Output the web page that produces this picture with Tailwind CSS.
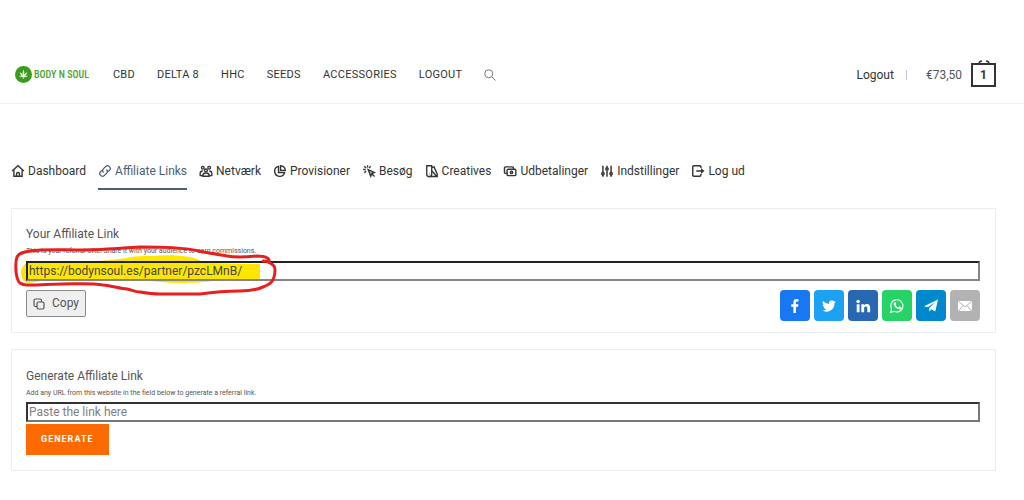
<!DOCTYPE html>
<html lang="da">
<head>
    <meta charset="UTF-8">
    <meta name="viewport" content="width=device-width, initial-scale=1.0">
    <title>Affiliate Links - Body N Soul</title>
    <script src="https://cdn.jsdelivr.net/npm/@tailwindcss/browser@4"></script>
</head>
<body class="bg-white font-['Roboto',sans-serif] text-[#333]">

    <!-- Header -->
    <header class="flex items-center h-[104px] pt-[46px] pl-[15px] pr-7 border-b border-[#f1f1f1]">
        <a href="#" class="flex items-center gap-[2px] text-[#4a9f2c]">
            <svg class="size-[17px]" viewBox="0 0 34 34">
                <circle cx="17" cy="17" r="17" fill="#3a9b1c"/>
                <path fill="#fff" d="M17 7c1.600 3.500 2 8 1 12 1.600-3.500 3.600-5.500 6.500-6.500-.8 3-2.500 5.500-5.200 7.500 2.400-1 4.500-1 6.700 0-2.500 1.600-5 2-7.500 1.400l1.800 2.200-2.800-1.200V26h-1v-3.600l-2.800 1.200 1.800-2.200c-2.500.6-5 .2-7.500-1.400 2.200-1 4.300-1 6.700 0-2.700-2-4.400-4.500-5.200-7.500 2.900 1 4.900 3 6.500 6.500-1-4-.6-8.500 1-12z"/>
            </svg>
            <span class="font-['Liberation_Sans_Narrow','Roboto_Condensed',sans-serif] text-[10px] font-medium whitespace-nowrap">BODY N SOUL</span>
        </a>
        <nav class="flex items-center gap-[22px] ml-6 pt-px text-[11px] tracking-wide">
            <a href="#">CBD</a>
            <a href="#">DELTA 8</a>
            <a href="#">HHC</a>
            <a href="#">SEEDS</a>
            <a href="#">ACCESSORIES</a>
            <a href="#">LOGOUT</a>
            <button type="button" aria-label="Search">
                <svg class="size-3" viewBox="0 0 24 24" fill="none" stroke="#777" stroke-width="2"><circle cx="9.500" cy="9.500" r="8"/><path d="M15.500 15.500 23 23"/></svg>
            </button>
        </nav>
        <div class="flex items-center ml-auto text-xs">
            <a href="#">Logout</a>
            <span class="w-px h-[10px] mx-3 bg-[#c9bfdc]"></span>
            <a href="#" class="flex items-center gap-[9px] ml-[7px] text-[#555]">
                €73,50
                <span class="relative flex items-center justify-center w-[25px] h-6 border-2 border-[#333] font-bold text-[#333]">
                    1
                    <svg class="absolute -top-[5px] left-[5px] w-3 h-1" viewBox="0 0 12 4" fill="none" stroke="#333" stroke-width="1.500"><path d="M1 4q0-3 3-3M8 1q3 0 3 3"/></svg>
                </span>
            </a>
        </div>
    </header>

    <main class="pl-[11px] pr-7 pt-12">
        <!-- Tabs -->
        <nav class="flex gap-3 text-xs">
            <a href="#" class="flex items-center gap-[3px] h-[38px] pt-[2px] border-b-2 border-transparent">
                <svg class="size-[14px]" viewBox="0 0 24 24" fill="none" stroke="currentColor" stroke-width="2.400"><path d="M2 12 12 3l10 9M5 10.500V21h14V10.500"/><path d="M9.500 21v-4a2.500 2.500 0 0 1 5 0v4"/></svg>
                Dashboard
            </a>
            <a href="#" class="flex items-center gap-[3px] h-[38px] pt-[2px] border-b-2 border-[#4b6076] text-[#4b6076]">
                <svg class="size-[14px]" viewBox="0 0 24 24" fill="none" stroke="currentColor" stroke-width="2.200"><path d="M9.500 14.500a4.600 4.600 0 0 1 0-6.500l3.700-3.700a4.600 4.600 0 0 1 6.500 6.500L17.500 13"/><path d="M14.500 9.500a4.600 4.600 0 0 1 0 6.500l-3.700 3.700a4.600 4.600 0 0 1-6.500-6.500L6.500 11"/></svg>
                Affiliate Links
            </a>
            <a href="#" class="flex items-center gap-[3px] h-[38px] pt-[2px] border-b-2 border-transparent">
                <svg class="size-[14px]" viewBox="0 0 24 24" fill="none" stroke="currentColor" stroke-width="2.300"><circle cx="6.500" cy="6.500" r="2.300"/><circle cx="17.500" cy="6.500" r="2.300"/><circle cx="12" cy="11" r="2.500"/><path d="M6.500 21v-1a5.500 4.500 0 0 1 11 0v1zM2 20v-4q0-4 4.500-4M22 20v-4q0-4-4.500-4M1 20h5M18 20h5"/></svg>
                Netværk
            </a>
            <a href="#" class="flex items-center gap-[3px] h-[38px] pt-[2px] border-b-2 border-transparent">
                <svg class="size-[14px]" viewBox="0 0 24 24" fill="none" stroke="currentColor" stroke-width="2.400"><path d="M9.500 4A8.700 8.700 0 1 0 20 14.500H9.500z"/><path d="M13 3v8h8a8 8 0 0 0-8-8z"/></svg>
                Provisioner
            </a>
            <a href="#" class="flex items-center gap-[3px] h-[38px] pt-[2px] border-b-2 border-transparent">
                <svg class="size-[14px]" viewBox="0 0 24 24" fill="none" stroke="currentColor" stroke-width="2.300"><path fill="currentColor" fill-opacity=".4" d="m10.500 9.500 11 5-4.500 2-2 4.500z"/><path d="m17 17 4.500 4.500M9.500 2v4M2 9.500h4M4 4l3 3M15 4l-3 3M4 15l3-3"/></svg>
                Besøg
            </a>
            <a href="#" class="flex items-center gap-[3px] h-[38px] pt-[2px] border-b-2 border-transparent">
                <svg class="size-[14px]" viewBox="0 0 24 24" fill="none" stroke="currentColor" stroke-width="2.300"><path d="M3 3h8.500v14.500a4.250 4.250 0 0 1-8.500 0z"/><path d="m12 6 3.500-1L21 17.500v4H8M12 12l8 9M7 17h1"/></svg>
                Creatives
            </a>
            <a href="#" class="flex items-center gap-[3px] h-[38px] pt-[2px] border-b-2 border-transparent">
                <svg class="size-[14px]" viewBox="0 0 24 24" fill="none" stroke="currentColor" stroke-width="2.400"><rect x="7" y="9" width="15" height="11" rx="2"/><circle cx="14.500" cy="14.500" r="2"/><path d="M7 16H4.500a2 2 0 0 1-2-2V7a2 2 0 0 1 2-2H16a2 2 0 0 1 2 2v2"/></svg>
                Udbetalinger
            </a>
            <a href="#" class="flex items-center gap-[3px] h-[38px] pt-[2px] border-b-2 border-transparent">
                <svg class="size-[14px]" viewBox="0 0 24 24" fill="none" stroke="currentColor" stroke-width="2.500"><path d="M5 3v11M5 19v3M12 3v3M12 11v11M19 3v11M19 19v3"/><circle cx="5" cy="16.500" r="2"/><circle cx="12" cy="8.500" r="2"/><circle cx="19" cy="16.500" r="2"/></svg>
                Indstillinger
            </a>
            <a href="#" class="flex items-center gap-[3px] h-[38px] pt-[2px] border-b-2 border-transparent">
                <svg class="size-[14px]" viewBox="0 0 24 24" fill="none" stroke="currentColor" stroke-width="2.400"><path d="M17 7V5a2 2 0 0 0-2-2H5a2 2 0 0 0-2 2v14a2 2 0 0 0 2 2h10a2 2 0 0 0 2-2v-2M9 12h11"/><path fill="currentColor" stroke="none" d="m17 7 6 5-6 5z"/></svg>
                Log ud
            </a>
        </nav>

        <!-- Affiliate link -->
        <section class="mt-[18px] pl-[14px] pr-[15px] pt-4 pb-[11px] border border-[#e8eef2]">
            <label for="affiliateLink" class="block text-xs leading-[18px] text-[#555]">Your Affiliate Link</label>
            <p class="text-[7px] leading-4 text-[#555]">This is your referral URL. Share it with your audience to earn commissions.</p>
            <div class="relative mt-[2px]">
                <!-- Yellow marker -->
                <svg class="absolute -left-[13px] -top-[18px] w-[266px] h-[54px]" viewBox="0 0 266 54" fill="none" aria-hidden="true">
                    <path fill="#ffe600" d="M8 28c1-5 5-9 9-9 8-2 38 1 63-1 14 0 24-2 34-3 8-2 16-2 23-2 14-1 28-1 40 1 7 1 12 5 17 6l53 1v15c-16 0-28 1-43 2-14 1-24 2-37 2-14 0-26-2-40-3-30-1-60 0-90-1-8 1-15 4-23 4-5-2-6-7-6-12z"/>
                </svg>
                <input id="affiliateLink" type="text" readonly value="https://bodynsoul.es/partner/pzcLMnB/"
                    class="relative block w-full h-5 px-px border-2 border-t-[#222] border-l-[#222] border-b-[#858585] border-r-[#858585] text-xs text-[#444] outline-none">
                <!-- Red circle around the link -->
                <svg class="absolute -left-[13px] -top-[18px] w-[266px] h-[54px] pointer-events-none" viewBox="0 0 266 54" fill="none" aria-hidden="true">
                    <path stroke="#e6201f" stroke-width="3" stroke-linecap="round" stroke-linejoin="round" d="M256 17c-1-3-5-4-12-4-10 1-20 2-30 0-9-1-16-3-24-4-20-5-40-5-63-5-20 1-42 3-63 3-16 0-32-1-47 1C10 9 6 10 4 14c-2 5-1 10-1 15 1 5 1 9 4 11 4 3 7 2 10 2 11 0 22-1 33-1 14 0 28-1 40 1 9 1 16 3 24 4 5 1 8 3 13 3 6 1 13 2 20 2h40c14-2 27-3 40-3 9 0 16-1 23-4 6-2 10-5 11-10 1-4 2-8 0-11-3-3-7-5-11-5"/>
                </svg>
            </div>
            <div class="flex items-start justify-between mt-[9px]">
                <button type="button" class="relative flex items-center gap-[7px] h-[27px] px-[6px] pb-[2px] bg-[#efefef] border border-[#8a8a8a] rounded-[2px] text-xs text-[#555]">
                    <svg class="size-3 mt-[2px]" viewBox="0 0 24 24" fill="none" stroke="currentColor" stroke-width="2.400"><rect x="8" y="8" width="14" height="14" rx="3"/><path d="M17 8V5a3 3 0 0 0-3-3H5a3 3 0 0 0-3 3v9a3 3 0 0 0 3 3h3"/></svg>
                    Copy
                </button>
                <div class="flex gap-1">
                    <a href="#" aria-label="Facebook" class="flex items-center justify-center w-[30px] h-[31px] rounded bg-[#1877f2]">
                        <svg class="size-4" viewBox="0 0 32 32" fill="#fff"><path d="M17.900 30V17.500h4.300l.7-5h-5V9.300c0-1.500.5-2.400 2.500-2.400H23V2.300C22.500 2.200 21 2 19.300 2c-3.900 0-6.500 2.400-6.500 6.700v3.800H8.500v5h4.300V30z"/></svg>
                    </a>
                    <a href="#" aria-label="Twitter" class="flex items-center justify-center w-[30px] h-[31px] rounded bg-[#1da1f2]">
                        <svg class="size-4" viewBox="2 2 28 28" fill="#fff"><path d="M28 8.600a10 10 0 0 1-2.800.8 5 5 0 0 0 2.100-2.700 9.900 9.900 0 0 1-3.100 1.200 4.900 4.900 0 0 0-8.400 4.500A14 14 0 0 1 5.700 7.200a4.900 4.900 0 0 0 1.500 6.600c-.8 0-1.600-.2-2.200-.6v.1c0 2.400 1.700 4.400 3.900 4.800a4.900 4.900 0 0 1-2.200.1 4.900 4.900 0 0 0 4.600 3.400A9.900 9.900 0 0 1 4 23.600 14 14 0 0 0 25.500 11.100c1-.7 1.800-1.600 2.500-2.500z"/></svg>
                    </a>
                    <a href="#" aria-label="LinkedIn" class="flex items-center justify-center w-[30px] h-[31px] rounded bg-[#2867b2]">
                        <svg class="size-4" viewBox="0 0 28 28" fill="#fff"><path d="M3 11h5v14H3zM11 11h5v2c1-1.600 2.700-2.500 5-2.500 4.300 0 5.500 3 5.500 7V25h-5v-6.800c0-2-.3-3.500-2.500-3.500S16 16.300 16 18.200V25h-5z"/><circle cx="5.500" cy="6" r="3"/></svg>
                    </a>
                    <a href="#" aria-label="WhatsApp" class="flex items-center justify-center w-[30px] h-[31px] rounded bg-[#25d366]">
                        <svg class="size-4" viewBox="1 1 30 30" fill="none"><path stroke="#fff" stroke-width="2.200" d="M4 28l1.800-6.300A11.500 11.500 0 1 1 10.500 26z"/><path fill="#fff" d="M11.500 9c.6-.4 1.300-.4 1.700.4l1.100 2.700c.2.600-.1 1-.9 1.900-.4.500-.2.700.1 1.200 1 1.500 2.300 2.700 4.300 3.500.5.200.8.200 1.100-.2l1.200-1.500c.4-.5.7-.4 1.200-.2l2.500 1.200c.6.300.7.500.6 1.200-.3 1.900-2 3-3.800 3-2.900 0-7-2.500-9.300-5.800-2.300-3.200-1.900-6.100.2-7.400z"/></svg>
                    </a>
                    <a href="#" aria-label="Telegram" class="flex items-center justify-center w-[30px] h-[31px] rounded bg-[#0088cc]">
                        <svg class="size-4" viewBox="0 0 32 32" fill="#fff"><path d="M30 3 2 16.500l7.500 2.200L25 8 12.500 20v7.500l4-5 8 4.500z"/></svg>
                    </a>
                    <a href="#" aria-label="Email" class="flex items-center justify-center w-[30px] h-[31px] rounded bg-[#b2b2b2]">
                        <svg class="size-4" viewBox="0 0 32 32"><rect x="2" y="6" width="28" height="20" rx="2" fill="#fff"/><path fill="none" stroke="#b2b2b2" stroke-width="2" d="m3 7 13 11L29 7M3 26l9-11M29 26l-9-11"/></svg>
                    </a>
                </div>
            </div>
        </section>

        <!-- Generate link -->
        <section class="mt-4 pl-[14px] pr-[15px] pt-[17px] pb-[15px] border border-[#e8eef2]">
            <form>
                <label for="pasteLink" class="block text-xs leading-[18px] text-[#555]">Generate Affiliate Link</label>
                <p class="text-[7px] leading-4 text-[#555]">Add any URL from this website in the field below to generate a referral link.</p>
                <input id="pasteLink" type="text" placeholder="Paste the link here"
                    class="block w-full h-5 mt-px px-px border-2 border-t-[#333] border-l-[#333] border-b-[#777] border-r-[#777] text-xs placeholder:text-[#808080] outline-none">
                <button type="button" class="block mt-[2px] h-[31px] px-[15px] bg-[#ff6a00] text-white text-[9px] font-bold tracking-[1px]">GENERATE</button>
            </form>
        </section>
    </main>

</body>
</html>
